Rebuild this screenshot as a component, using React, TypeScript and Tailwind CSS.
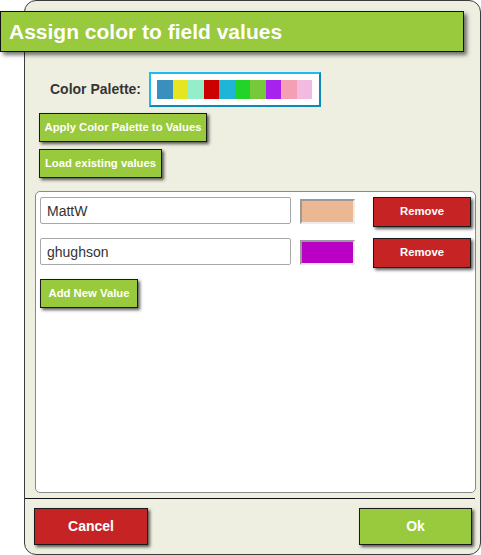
import React from "react"

const palette = [
  "#3a8fbd",
  "#e5e522",
  "#94eec9",
  "#cc0000",
  "#1fb5d6",
  "#22d42a",
  "#77c93c",
  "#a822ee",
  "#f49fb3",
  "#f4b9df",
]

const values = [
  { name: "MattW", color: "#ecb894" },
  { name: "ghughson", color: "#bb00c6" },
]

const btn =
  "border border-[#1a1a1a] text-white font-bold shadow-[2px_2px_3px_rgba(0,0,0,0.65)] flex items-center justify-center"

export default function App() {
  return (
    <div className="w-[481px] h-[555px] bg-white font-['Liberation_Sans',Arial,sans-serif]">
      <div className="ml-[24px] w-[457px] h-[555px] rounded-[12px] border border-[#3c3c3c] bg-[#efefe1] flex flex-col">
        <div className="-ml-[25px] mt-[10px] w-[464px] h-[41px] bg-[#99c93c] border border-[#111] shadow-[3px_3px_4px_rgba(0,0,0,0.55)] flex items-center pl-[8px] text-white text-[21px] font-bold">
          Assign color to field values
        </div>

        <div className="flex items-center mt-[20px] ml-[25px] gap-[8px]">
          <span className="text-[14px] font-bold text-[#353535]">Color Palette:</span>
          <div className="w-[172px] h-[35px] border-2 border-t-[#1cbcef] border-l-[#1cbcef] border-r-[#0a8ab5] border-b-[#0a8ab5] bg-white flex items-center px-[6px]">
            {palette.map(c => (
              <div key={c} className="w-[15.5px] h-[19px]" style={{ backgroundColor: c }} />
            ))}
          </div>
        </div>

        <button className={`${btn} bg-[#99c93c] ml-[14px] mt-[6px] w-[168px] h-[29px] text-[11.3px]`}>
          Apply Color Palette to Values
        </button>
        <button className={`${btn} bg-[#99c93c] ml-[14px] mt-[7px] w-[123px] h-[29px] text-[11.3px]`}>
          Load existing values
        </button>

        <div className="ml-[10px] mt-[13px] w-[441px] h-[302px] bg-white border border-[#8a8a8a] rounded-[5px] px-[4px] pt-[5px]">
          {values.map(v => (
            <div key={v.name} className="flex items-start h-[41px]">
              <input
                readOnly
                value={v.name}
                className="w-[251px] h-[27px] border border-[#a8a8a8] rounded-[2px] px-[6px] text-[14px] text-[#333] outline-none font-['Liberation_Sans',Arial,sans-serif]"
              />
              <div
                className="ml-[9px] mt-[2px] w-[55px] h-[25px] border-2 border-t-[#9a9a9a] border-l-[#9a9a9a] border-r-[#ececec] border-b-[#ececec]"
                style={{ backgroundColor: v.color }}
              />
              <button className={`${btn} bg-[#c62424] ml-[18px] w-[98px] h-[30px] text-[11.3px] pb-[2px]`}>
                Remove
              </button>
            </div>
          ))}
          <button className={`${btn} bg-[#99c93c] w-[98px] h-[29px] text-[11.3px]`}>
            Add New Value
          </button>
        </div>

        <div className="mt-[5px] mr-[5px] h-px bg-[#111]" />

        <div className="flex justify-between pl-[9px] pr-[8px] mt-[9px]">
          <button className={`${btn} bg-[#c62424] w-[114px] h-[37px] text-[14px]`}>Cancel</button>
          <button className={`${btn} bg-[#99c93c] w-[113px] h-[37px] text-[14px]`}>Ok</button>
        </div>
      </div>
    </div>
  )
}
